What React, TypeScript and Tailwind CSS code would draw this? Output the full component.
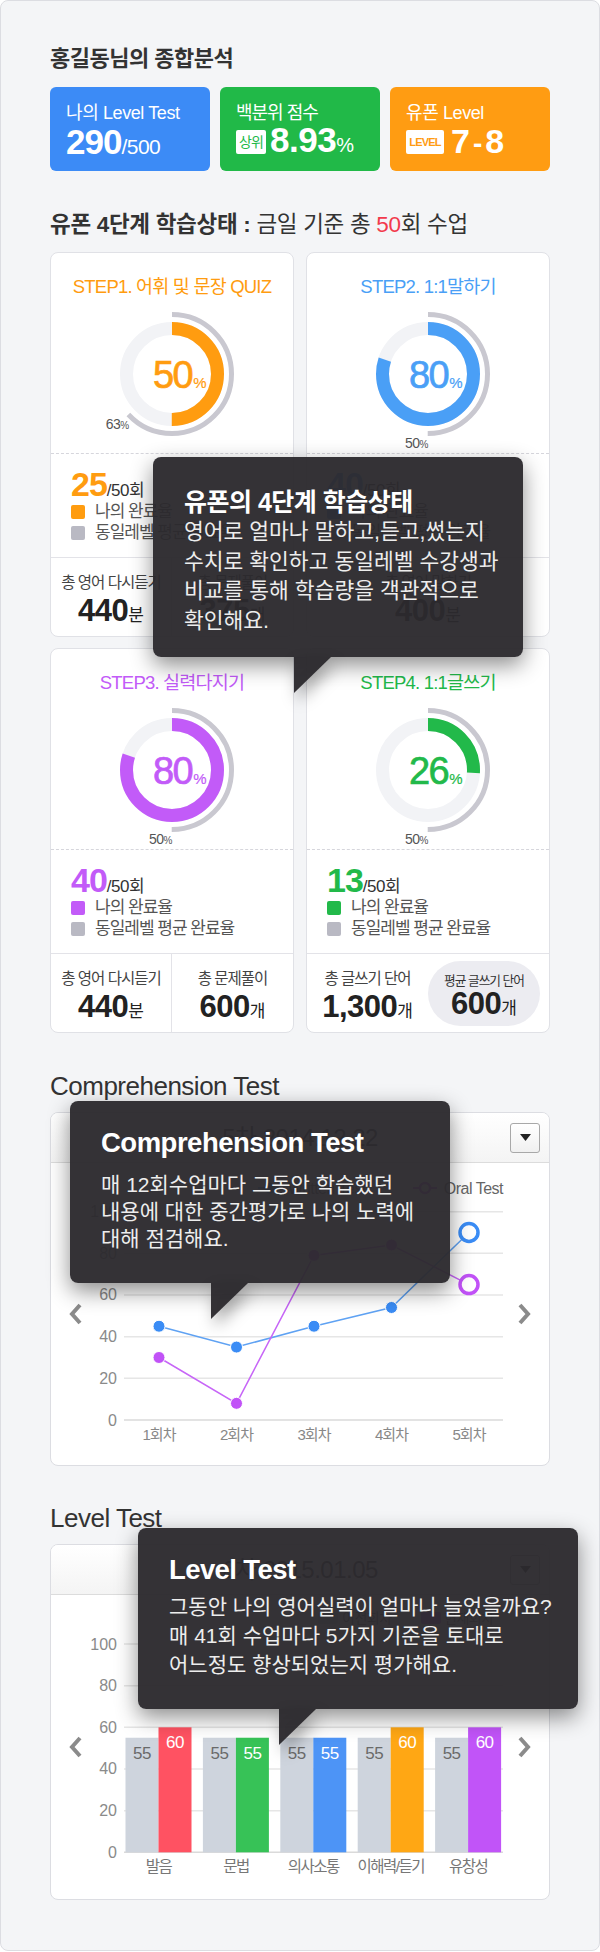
import React from "react";

type Step = {
  title: string;
  color: string;
  text: string;
  bg: string;
  pct: number;
  avg: number;
  done: number;
  bottom: React.ReactNode;
};

function Donut({ pct, avg, color }: { pct: number; avg: number; color: string }) {
  const cx = 80;
  const cy = 66;
  const r = 45.5;
  const ar = 59.5;
  const c = 2 * Math.PI * r;
  const ac = 2 * Math.PI * ar;
  const a = (avg / 100) * 2 * Math.PI;
  const ex = cx + ar * Math.sin(a);
  const ey = cy - ar * Math.cos(a);
  return (
    <svg width="160" height="145" className="mx-auto mt-[10px] block">
      <circle cx={cx} cy={cy} r={r} fill="none" stroke="#f2f3f6" strokeWidth={13} />
      <circle
        cx={cx}
        cy={cy}
        r={r}
        fill="none"
        stroke={color}
        strokeWidth={13}
        strokeDasharray={`${(c * pct) / 100} ${c}`}
        transform={`rotate(-90 ${cx} ${cy})`}
      />
      <circle
        cx={cx}
        cy={cy}
        r={ar}
        fill="none"
        stroke="#c9c8d0"
        strokeWidth={5}
        strokeDasharray={`${(ac * avg) / 100} ${ac}`}
        transform={`rotate(-90 ${cx} ${cy})`}
      />
      <text
        x={cx + 7}
        y={cy + 14}
        textAnchor="middle"
        fill={color}
        stroke={color}
        strokeWidth={0.7}
        fontSize={38}
        letterSpacing={-1.5}
      >
        {pct}
        <tspan fontSize={15} dx={1} strokeWidth={0.2}>
          %
        </tspan>
      </text>
      <text x={ex} y={ey + 14} textAnchor="end" fill="#555" fontSize={14} letterSpacing={-0.5}>
        {avg}
        <tspan fontSize={10}>%</tspan>
      </text>
    </svg>
  );
}

const Stat = ({ label, value, unit }: { label: string; value: string; unit: string }) => (
  <div className="flex flex-col items-center">
    <div className="mt-[15px] h-[20px] text-[15.5px] leading-[20px] tracking-[-1px] text-[#444]">{label}</div>
    <div className="flex h-[36px] items-baseline text-[#222]">
      <span className="text-[31px] font-bold leading-[36px] tracking-[-0.5px]">{value}</span>
      <span className="text-[17px] leading-[36px]">{unit}</span>
    </div>
  </div>
);

const steps: Step[] = [
  {
    title: "STEP1. 어휘 및 문장 QUIZ",
    color: "#ff9c10",
    text: "text-[#ff9c10]",
    bg: "bg-[#ff9c10]",
    pct: 50,
    avg: 63,
    done: 25,
    bottom: (
      <div className="grid h-[79px] grid-cols-2 border-t border-[#e3e3e8]">
        <div className="border-r border-[#e3e3e8]">
          <Stat label="총 영어 다시듣기" value="440" unit="분" />
        </div>
        <Stat label="총 문제풀이" value="375" unit="개" />
      </div>
    ),
  },
  {
    title: "STEP2. 1:1말하기",
    color: "#4a9ff6",
    text: "text-[#4a9ff6]",
    bg: "bg-[#4a9ff6]",
    pct: 80,
    avg: 50,
    done: 40,
    bottom: (
      <div className="h-[79px] border-t border-[#e3e3e8]">
        <Stat label="총 영어 말하기" value="400" unit="분" />
      </div>
    ),
  },
  {
    title: "STEP3. 실력다지기",
    color: "#c25bf8",
    text: "text-[#c25bf8]",
    bg: "bg-[#c25bf8]",
    pct: 80,
    avg: 50,
    done: 40,
    bottom: (
      <div className="grid h-[79px] grid-cols-2 border-t border-[#e3e3e8]">
        <div className="border-r border-[#e3e3e8]">
          <Stat label="총 영어 다시듣기" value="440" unit="분" />
        </div>
        <Stat label="총 문제풀이" value="600" unit="개" />
      </div>
    ),
  },
  {
    title: "STEP4. 1:1글쓰기",
    color: "#22b94a",
    text: "text-[#22b94a]",
    bg: "bg-[#22b94a]",
    pct: 26,
    avg: 50,
    done: 13,
    bottom: (
      <div className="grid h-[79px] grid-cols-2 border-t border-[#e3e3e8]">
        <Stat label="총 글쓰기 단어" value="1,300" unit="개" />
        <div className="flex justify-end pr-[9px] pt-[7px]">
          <div className="flex h-[65px] w-[113px] flex-col items-center rounded-full bg-[#ececf1]">
            <div className="mt-[12px] h-[16px] text-[12.7px] leading-[16px] tracking-[-1px] text-[#333]">평균 글쓰기 단어</div>
            <div className="flex h-[30px] items-baseline text-[#222]">
              <span className="text-[31px] font-bold leading-[30px] tracking-[-0.5px]">600</span>
              <span className="text-[17px] leading-[30px]">개</span>
            </div>
          </div>
        </div>
      </div>
    ),
  },
];

function StepCard({ s }: { s: Step }) {
  return (
    <div className="h-[385px] overflow-hidden rounded-[8px] border border-[#e0e1e6] bg-white">
      <div className="h-[200px]">
        <div className={`h-[45px] pt-[23px] text-center text-[18.5px] leading-[22px] tracking-[-0.8px] ${s.text}`}>
          {s.title}
        </div>
        <Donut pct={s.pct} avg={s.avg} color={s.color} />
      </div>
      <div className="h-[104px] border-t border-dashed border-[#d6d6dc] px-[20px] pt-[13px]">
        <div className="flex h-[34px] items-baseline">
          <span className={`text-[34px] font-bold leading-[34px] tracking-[-1px] ${s.text}`}>{s.done}</span>
          <span className="text-[17px] leading-[34px] tracking-[-0.5px] text-[#333]">/50회</span>
        </div>
        <div className="flex h-[21px] items-center gap-[10px] text-[17px] leading-[21px] tracking-[-1px] text-[#555]">
          <span className={`h-[14px] w-[14px] shrink-0 rounded-[2px] ${s.bg}`} />
          나의 완료율
        </div>
        <div className="flex h-[21px] items-center gap-[10px] text-[17px] leading-[21px] tracking-[-1px] text-[#555]">
          <span className="h-[14px] w-[14px] shrink-0 rounded-[2px] bg-[#b9b9c3]" />
          동일레벨 평균 완료율
        </div>
      </div>
      {s.bottom}
    </div>
  );
}

const Chevron = ({ dir }: { dir: "l" | "r" }) => (
  <svg width="13" height="22" className="block shrink-0">
    <polyline
      points={dir === "l" ? "11,2 3,11 11,20" : "2,2 10,11 2,20"}
      fill="none"
      stroke="#8b8b8b"
      strokeWidth={4}
    />
  </svg>
);

function ChartCard({ date, children }: { date: string; children: React.ReactNode }) {
  return (
    <div className="overflow-hidden rounded-[8px] border border-[#dcdde2] bg-white">
      <div className="grid h-[50px] grid-cols-[1fr_auto_1fr] items-center border-b border-[#dcdcdc] bg-gradient-to-b from-white to-[#f4f4f4]">
        <div />
        <div className="text-[24px] leading-[30px] tracking-[-0.5px] text-[#333]">{date}</div>
        <div className="flex justify-end pr-[9px]">
          <div className="flex h-[30px] w-[30px] items-center justify-center rounded-[3px] border border-[#a8a8a8] bg-gradient-to-b from-white to-[#f0f0f0]">
            <svg width="11" height="7">
              <polygon points="0,0 11,0 5.5,7" fill="#222" />
            </svg>
          </div>
        </div>
      </div>
      <div className="flex items-center pl-[18px]">
        <Chevron dir="l" />
        {children}
        <Chevron dir="r" />
      </div>
    </div>
  );
}

function LineChart() {
  const xs = [0, 1, 2, 3, 4].map((i) => 77 + 77.5 * i);
  const Y = (v: number) => 257 - v * 2.0835;
  const blue = [45, 35, 45, 54, 90];
  const purple = [30, 8, 79, 84, 65];
  const pts = (d: number[]) => d.map((v, i) => `${xs[i]},${Y(v)}`).join(" ");
  return (
    <svg width="436" height="302" className="block">
      {[0, 20, 40, 60, 80, 100].map((v) => (
        <g key={v}>
          <line x1={42} x2={421} y1={Y(v)} y2={Y(v)} stroke={v === 0 ? "#dadada" : "#e6e6e6"} strokeWidth={1.5} />
          <text x={35} y={Y(v) + 5.5} textAnchor="end" fontSize={16} fill="#8a8a8a">
            {v}
          </text>
        </g>
      ))}
      <line x1={176} x2={200} y1={25} y2={25} stroke="#3a8cf5" strokeWidth={2} />
      <circle cx={188} cy={25} r={5.5} fill="#3a8cf5" />
      <text x={206} y={30.5} fontSize={16} fill="#666" letterSpacing={-0.5}>
        Written Test
      </text>
      <line x1={331} x2={355} y1={25} y2={25} stroke="#c152f7" strokeWidth={2} />
      <circle cx={343} cy={25} r={5} fill="#fff" stroke="#c152f7" strokeWidth={2.5} />
      <text x={421} y={30.5} textAnchor="end" fontSize={16} fill="#666" letterSpacing={-0.5}>
        Oral Test
      </text>
      {["1회차", "2회차", "3회차", "4회차", "5회차"].map((t, i) => (
        <text key={t} x={xs[i]} y={277} textAnchor="middle" fontSize={15} fill="#888" letterSpacing={-1}>
          {t}
        </text>
      ))}
      <polyline points={pts(blue)} fill="none" stroke="#5fa2f3" strokeWidth={1.5} />
      <polyline points={pts(purple)} fill="none" stroke="#c766f7" strokeWidth={1.5} />
      {blue.slice(0, 4).map((v, i) => (
        <circle key={i} cx={xs[i]} cy={Y(v)} r={6} fill="#3a8cf5" stroke="#fff" strokeWidth={1} />
      ))}
      {purple.slice(0, 4).map((v, i) => (
        <circle key={i} cx={xs[i]} cy={Y(v)} r={6} fill="#c152f7" stroke="#fff" strokeWidth={1} />
      ))}
      <circle cx={xs[4]} cy={Y(blue[4])} r={9} fill="#fff" stroke="#3a8cf5" strokeWidth={3.5} />
      <circle cx={xs[4]} cy={Y(purple[4])} r={9} fill="#fff" stroke="#c152f7" strokeWidth={3.5} />
    </svg>
  );
}

function BarChart() {
  const Y = (v: number) => 257.3 - v * 2.083;
  const cats = ["발음", "문법", "의사소통", "이해력/듣기", "유창성"];
  const colors = ["#ff5262", "#37c257", "#4d94f6", "#ffa714", "#c154f8"];
  const cur = [60, 55, 55, 60, 60];
  return (
    <svg width="436" height="304" className="block">
      {[0, 20, 40, 60, 80, 100].map((v) => (
        <g key={v}>
          <line x1={42} x2={421} y1={Y(v)} y2={Y(v)} stroke={v === 0 ? "#dadada" : "#e6e6e6"} strokeWidth={1.5} />
          <text x={35} y={Y(v) + 5.5} textAnchor="end" fontSize={16} fill="#8a8a8a">
            {v}
          </text>
        </g>
      ))}
      <rect x={236} y={17} width={20} height={12} rx={2} fill="#ced4dd" />
      <text x={260} y={28} fontSize={14} fill="#666" letterSpacing={-0.5}>
        이전회차
      </text>
      <rect x={339} y={17} width={20} height={12} rx={2} fill="#c154f8" />
      <text x={362} y={28} fontSize={14} fill="#666" letterSpacing={-0.5}>
        현재회차
      </text>
      {cats.map((c, i) => {
        const gx = 43.5 + 77.4 * i;
        return (
          <g key={c}>
            <rect x={gx} y={Y(55)} width={33} height={Y(0) - Y(55)} fill="#ced4dd" />
            <rect x={gx + 33} y={Y(cur[i])} width={33} height={Y(0) - Y(cur[i])} fill={colors[i]} />
            <text x={gx + 16.5} y={Y(55) + 21} textAnchor="middle" fontSize={17} fill="#6a6a6a" letterSpacing={-0.5}>
              55
            </text>
            <text x={gx + 49.5} y={Y(cur[i]) + 21} textAnchor="middle" fontSize={17} fill="#fff" letterSpacing={-0.5}>
              {cur[i]}
            </text>
            <text x={gx + 33} y={277} textAnchor="middle" fontSize={15.5} fill="#777" letterSpacing={-1.5}>
              {c}
            </text>
          </g>
        );
      })}
    </svg>
  );
}

function Tooltip({
  pos,
  title,
  lines,
  titleCls,
  bodyCls,
}: {
  pos: string;
  title: string;
  lines: string[];
  titleCls: string;
  bodyCls: string;
}) {
  return (
    <div className={`absolute rounded-[8px] bg-[#2c2a2e]/[0.96] pl-[31px] text-white shadow-[0_8px_22px_rgba(0,0,0,0.45)] ${pos}`}>
      <div className={`h-[32px] font-bold leading-[32px] ${titleCls}`}>{title}</div>
      <div className={`text-[#ededed] ${bodyCls}`}>
        {lines.map((l) => (
          <div key={l}>{l}</div>
        ))}
      </div>
      <svg
        width="37"
        height="36"
        className="absolute top-full left-[141px] drop-shadow-[4px_8px_8px_rgba(0,0,0,0.35)]"
      >
        <polygon points="0,0 37,0 0,36" fill="#2c2a2e" fillOpacity={0.96} />
      </svg>
    </div>
  );
}

export default function App() {
  return (
    <div className="w-[600px] bg-white font-['Liberation_Sans','Noto_Sans_CJK_KR',sans-serif]">
      <div className="relative rounded-[8px] border border-[#dcdde2] bg-[#f4f5f7] px-[49px] pt-[44px] pb-[50px]">
        <h2 className="h-[28px] text-[22px] font-bold leading-[28px] tracking-[-0.5px] text-[#333]">홍길동님의 종합분석</h2>

        <div className="mt-[14px] grid grid-cols-3 gap-[10px] text-white">
          <div className="h-[84px] rounded-[6px] bg-[#3c8bf6] px-[16px] pt-[15px]">
            <div className="h-[22px] text-[18px] leading-[22px] tracking-[-0.4px]">나의 Level Test</div>
            <div className="flex h-[36px] items-baseline">
              <span className="text-[35px] font-bold leading-[36px] tracking-[-1px]">290</span>
              <span className="text-[21px] leading-[36px] tracking-[-0.5px]">/500</span>
            </div>
          </div>
          <div className="h-[84px] rounded-[6px] bg-[#21b948] px-[16px] pt-[15px]">
            <div className="h-[22px] text-[18px] leading-[22px] tracking-[-1px]">백분위 점수</div>
            <div className="flex h-[36px] items-center">
              <span className="mr-[4px] flex h-[24px] w-[30px] shrink-0 items-center justify-center rounded-[2px] bg-white text-[14px] leading-none tracking-[-1px] text-[#21b948]">
                상위
              </span>
              <span className="flex items-baseline">
                <span className="text-[35px] font-bold leading-[36px] tracking-[-0.5px]">8.93</span>
                <span className="text-[20px] leading-[36px]">%</span>
              </span>
            </div>
          </div>
          <div className="h-[84px] rounded-[6px] bg-[#ff9c12] px-[16px] pt-[15px]">
            <div className="h-[22px] text-[18px] leading-[22px] tracking-[-0.4px]">유폰 Level</div>
            <div className="flex h-[36px] items-center">
              <span className="mr-[7px] flex h-[24px] w-[38px] shrink-0 items-center justify-center rounded-[2px] bg-white text-[11px] font-bold leading-none tracking-[-0.8px] text-[#ff9c12]">
                LEVEL
              </span>
              <span className="flex items-baseline font-bold">
                <span className="text-[34px] leading-[36px]">7</span>
                <span className="mx-[3px] text-[28px] leading-[36px]">-</span>
                <span className="text-[34px] leading-[36px]">8</span>
              </span>
            </div>
          </div>
        </div>

        <h2 className="mt-[40px] h-[28px] text-[22.5px] leading-[28px] tracking-[-0.3px] text-[#333]">
          <span className="font-bold">유폰 4단계 학습상태 :</span> 금일 기준 총{" "}
          <span className="text-[#f23a4c]">50</span>회 수업
        </h2>

        <div className="mt-[13px] grid grid-cols-2 gap-x-[12px] gap-y-[11px]">
          {steps.map((s) => (
            <StepCard key={s.title} s={s} />
          ))}
        </div>

        <h2 className="mt-[39px] h-[28px] text-[26px] leading-[28px] tracking-[-0.5px] text-[#333]">Comprehension Test</h2>
        <div className="mt-[12px]">
          <ChartCard date="5차 2014.12.22">
            <LineChart />
          </ChartCard>
        </div>

        <h2 className="mt-[38px] h-[28px] text-[26px] leading-[28px] tracking-[-0.5px] text-[#333]">Level Test</h2>
        <div className="mt-[12px]">
          <ChartCard date="6차 2015.01.05">
            <BarChart />
          </ChartCard>
        </div>

        <Tooltip
          pos="left-[152px] top-[456px] w-[370px] h-[200px] pt-[29px]"
          title="유폰의 4단계 학습상태"
          titleCls="text-[25px] tracking-[-0.5px]"
          bodyCls="text-[21.5px] leading-[29.5px]"
          lines={["영어로 얼마나 말하고,듣고,썼는지", "수치로 확인하고 동일레벨 수강생과", "비교를 통해 학습량을 객관적으로", "확인해요."]}
        />
        <Tooltip
          pos="left-[69px] top-[1100px] w-[380px] h-[182px] pt-[26px]"
          title="Comprehension Test"
          titleCls="text-[27.5px] tracking-[-0.5px]"
          bodyCls="mt-[12px] text-[21px] leading-[27px]"
          lines={["매 12회수업마다 그동안 학습했던", "내용에 대한 중간평가로 나의 노력에", "대해 점검해요."]}
        />
        <Tooltip
          pos="left-[137px] top-[1527px] w-[440px] h-[181px] pt-[26px]"
          title="Level Test"
          titleCls="text-[27.5px] tracking-[-0.6px]"
          bodyCls="mt-[6px] text-[21px] leading-[29px]"
          lines={["그동안 나의 영어실력이 얼마나 늘었을까요?", "매 41회 수업마다 5가지 기준을 토대로", "어느정도 향상되었는지 평가해요."]}
        />
      </div>
    </div>
  );
}
